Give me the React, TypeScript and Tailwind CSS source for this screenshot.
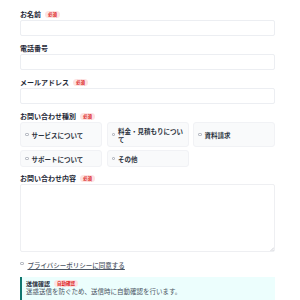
import React from 'react'

function Badge({ text }: { text: string }) {
    return (
        <span className="inline-flex items-center h-[7px] px-[3px] rounded-full bg-[#fde2e2] text-[#dc2626] text-[4.5px] font-bold leading-none">
            {text}
        </span>
    )
}

function Label({ text, required }: { text: string; required?: boolean }) {
    return (
        <div className="flex items-center gap-[4px] h-2 mb-[2px] text-[7px] font-bold text-[#1f2937] leading-none">
            <span>{text}</span>
            {required && <Badge text="必須" />}
        </div>
    )
}

function Field({ label, required }: { label: string; required?: boolean }) {
    return (
        <div className="mb-2">
            <Label text={label} required={required} />
            <input className="block w-full h-4 rounded-[2px] border border-[#eceef2] bg-white outline-none" />
        </div>
    )
}

const kinds = ['サービスについて', '料金・見積もりについて', '資料請求', 'サポートについて', 'その他']

export default function App() {
    return (
        <div className="w-[300px] h-[300px] overflow-hidden bg-white font-['Noto_Sans_CJK_JP',sans-serif]">
            <div className="pl-5 pr-[25px] pt-[10px]">
                <Field label="お名前" required />
                <Field label="電話番号" />
                <Field label="メールアドレス" required />

                <div className="mb-[7px]">
                    <Label text="お問い合わせ種別" required />
                    <div className="grid grid-cols-3 gap-x-[4.5px] gap-y-[3px]">
                        {kinds.map((k) => (
                            <label
                                key={k}
                                className="flex items-center gap-[3px] pl-[4px] pr-[2px] py-[3.5px] rounded-[3px] border border-[#f1f2f5] bg-[#f9fafb] text-[6.5px] leading-[8px] font-bold text-[#2d3440]"
                            >
                                <span className="shrink-0 w-[3.5px] h-[3.5px] border-[0.5px] border-[#b8bcc4] rounded-[1px] bg-white" />
                                <span>{k}</span>
                            </label>
                        ))}
                    </div>
                </div>

                <div>
                    <Label text="お問い合わせ内容" required />
                    <div className="relative">
                        <textarea className="block w-full h-[68px] resize-none rounded-[2px] border border-[#eeeff2] bg-white outline-none" />
                        <svg className="absolute right-[1px] bottom-[1px]" width="4" height="4" viewBox="0 0 4 4">
                            <path d="M4 0.5 L0.5 4 M4 2.5 L2.5 4" stroke="#9ca3af" strokeWidth="0.5" />
                        </svg>
                    </div>
                </div>

                <div className="flex items-start gap-[4px] mt-[9px] mb-2 h-2">
                    <span className="mt-[0.5px] w-[3.5px] h-[3.5px] border-[0.5px] border-[#b8bcc4] rounded-[1px] bg-white" />
                    <a href="#" className="text-[6.5px] leading-[8px] font-medium text-[#4b5563] underline">
                        プライバシーポリシーに同意する
                    </a>
                </div>

                <div className="border-l-2 border-[#0f766e] bg-[#ecfefd] pl-[4px] pt-[3px] pb-[6px]">
                    <div className="flex items-center gap-[4px] h-[7px] text-[6px] font-bold text-[#1f2937] leading-none">
                        <span>送信確認</span>
                        <Badge text="自動確認" />
                    </div>
                    <div className="text-[6.5px] leading-[8px] text-[#4b5563]">
                        迷惑送信を防ぐため、送信時に自動確認を行います。
                    </div>
                </div>
            </div>
        </div>
    )
}
